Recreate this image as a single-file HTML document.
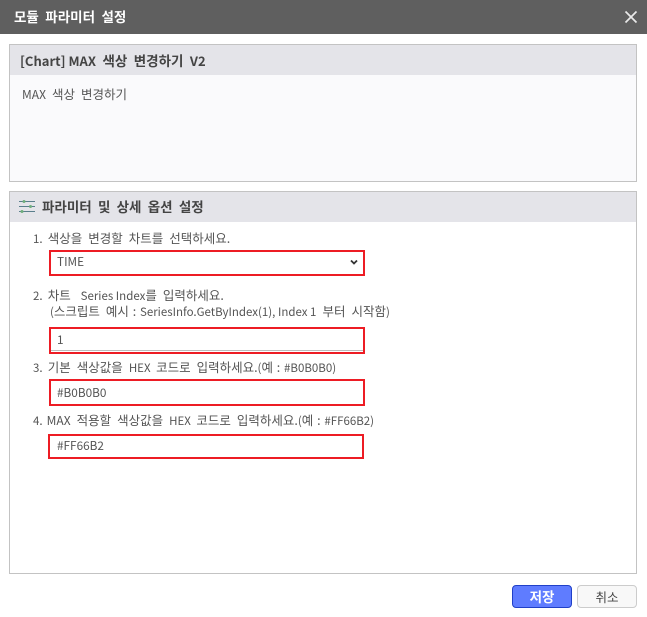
<!DOCTYPE html>
<html><head><meta charset="utf-8">
<style>
*{box-sizing:border-box}
html,body{margin:0;padding:0;width:647px;height:617px;overflow:hidden;background:#fff;font-family:"Noto Sans CJK KR","Liberation Sans",sans-serif;color:#555}
.a{position:absolute;white-space:nowrap}
.box{position:absolute;border:1px solid #c3c3c3;background:#fff}
.red{position:absolute;border:2px solid #ed1c24;background:#fff;font-size:11.8px;color:#555;padding-left:6px;line-height:21px}
.lb{font-size:11.5px;color:#555;line-height:16px}
.k{font-size:12.5px;word-spacing:3.2px}
.c{font-size:12.5px;word-spacing:1px}
.t{font-size:13.5px;word-spacing:3.4px;font-weight:bold}
</style></head><body>
<div class="a" style="left:0;top:0;width:647px;height:34px;background:#5f5f5f"></div>
<div class="a t" style="left:14px;top:7px;color:#fff;line-height:18px">모듈 파라미터 설정</div>
<svg class="a" style="left:624px;top:10px" width="14" height="14" viewBox="0 0 14 14"><path d="M1.500 1.500L12.500 12.500M12.500 1.500L1.500 12.500" stroke="#eaeaea" stroke-width="1.700" fill="none"/></svg>

<div class="box" style="left:9px;top:44px;width:628px;height:138px;background:#fafafc"></div>
<div class="a" style="left:10px;top:45px;width:626px;height:30px;background:#e4e4e9"></div>
<div class="a" style="left:20px;top:51px;font-size:13px;font-weight:bold;color:#444;line-height:18px">[Chart] MAX<span class="t"> 색상 변경하기 </span>V2</div>
<div class="a lb" style="left:22px;top:86px;font-size:12px">MAX<span class="k"> 색상 변경하기</span></div>

<div class="box" style="left:9px;top:191px;width:628px;height:383px"></div>
<div class="a" style="left:10px;top:192px;width:626px;height:30px;background:#e4e4e9"></div>
<svg class="a" style="left:18px;top:199px" width="18" height="15" viewBox="0 0 18 15"><path d="M1 2.500H17M1 7.500H17M1 12.500H17" stroke="#5a7f8c" stroke-width="1" fill="none"/><circle cx="6" cy="2.500" r="1.500" fill="#6fae7c"/><circle cx="12.500" cy="7.500" r="1.500" fill="#6fae7c"/><circle cx="4" cy="12.500" r="1.500" fill="#6fae7c"/></svg>
<div class="a t" style="left:42px;top:197px;color:#444;line-height:18px;word-spacing:3.2px">파라미터 및 상세 옵션 설정</div>

<div class="a lb" style="left:33px;top:230px">1.<span class="k" style="margin-left:-.8px"> 색상을 변경할 차트를 선택하세요.</span></div>
<div class="red" style="left:49px;top:250px;width:316px;height:26px;line-height:20px">TIME</div>
<svg class="a" style="left:349px;top:258px" width="10" height="8" viewBox="0 0 10 8"><path d="M2 2.500L5 5.500L8 2.500" stroke="#333" stroke-width="1.800" fill="none"/></svg>

<div class="a lb" style="left:33px;top:287px">2.<span class="k" style="margin-left:-.8px"> 차트&nbsp;</span><span class="c">&nbsp;</span>Series Index<span class="k">를 입력하세요.</span></div>
<div class="a lb" style="left:50px;top:303px">(<span class="k">스크립트 예시</span><span class="c"> : </span>SeriesInfo.GetByIndex(1), Index 1<span class="k"> 부터 시작함</span>)</div>
<div class="red" style="left:49px;top:327px;width:316px;height:27px;line-height:22px">1</div>
<div class="a" style="left:51px;top:350px;width:312px;height:1px;background:#bbb"></div>

<div class="a lb" style="left:33px;top:359px">3.<span class="k" style="margin-left:-.8px"> 기본 색상값을 </span>HEX<span class="k" style="margin-left:-.5px"> 코드로 입력하세요.</span>(<span class="k">예</span><span class="c"> : </span>#B0B0B0)</div>
<div class="red" style="left:49px;top:379px;width:316px;height:27px;line-height:23px">#B0B0B0</div>

<div class="a lb" style="left:33px;top:412px">4. <span style="margin-left:1.500px;font-size:12px">MAX</span><span class="k"> 적용할 색상값을 </span>HEX<span class="k" style="margin-left:-.5px"> 코드로 입력하세요.</span>(<span class="k">예</span><span class="c"> : </span>#FF66B2)</div>
<div class="red" style="left:48px;top:434px;width:316px;height:25px;line-height:20px;padding-left:7px">#FF66B2</div>

<div class="a" style="left:512px;top:585px;width:60px;height:23px;background:#5f7cff;border:1px solid #2040c8;border-radius:4px;color:#fff;font-size:13.5px;font-weight:bold;text-align:center;line-height:21px">저장</div>
<div class="a" style="left:577px;top:585px;width:60px;height:23px;background:#f8f8f8;border:1px solid #ccc;border-radius:4px;color:#444;font-size:12.5px;text-align:center;line-height:21px">취소</div>
</body></html>
